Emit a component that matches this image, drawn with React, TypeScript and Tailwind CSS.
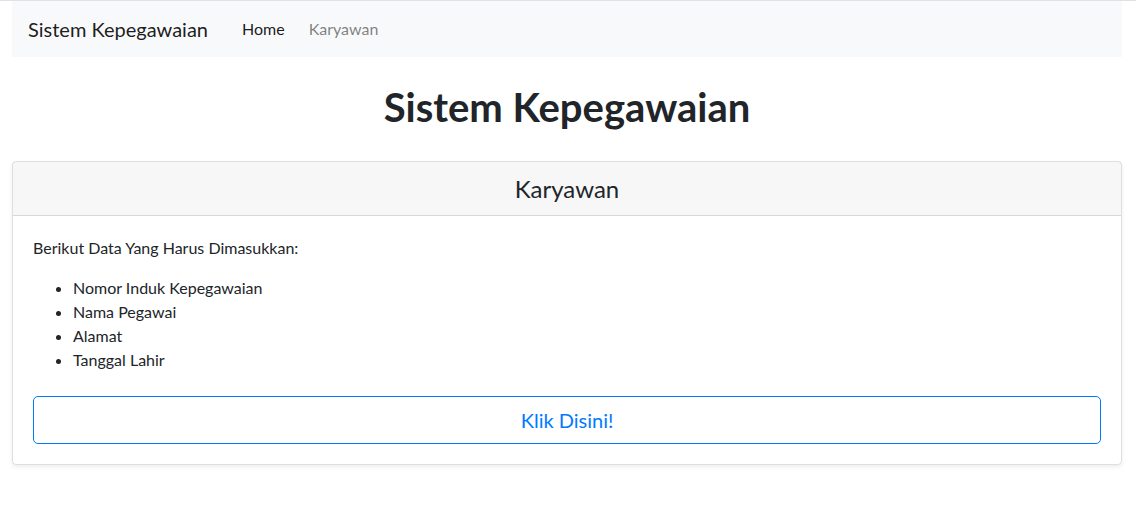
export default function App() {
  const items = ["Nomor Induk Kepegawaian", "Nama Pegawai", "Alamat", "Tanggal Lahir"]

  return (
    <div className="min-h-[521px] bg-white border-t border-[#dee2e6] font-['Lato',sans-serif] text-[#212529]">
      <div className="w-[1110px] ml-[12px]">
        {/* Navbar */}
        <nav className="flex items-center h-[56px] px-4 bg-[#f8f9fa]">
          <a className="text-[20px] leading-[30px] text-black/90 mr-[22px]">Sistem Kepegawaian</a>
          <a className="px-3 text-[16px] leading-6 text-black/90">Home</a>
          <a className="px-3 text-[16px] leading-6 text-black/50">Karyawan</a>
        </nav>

        <h1 className="mt-[26px] mb-[30px] text-center text-[40px] leading-[48px] font-bold">
          Sistem Kepegawaian
        </h1>

        {/* Card */}
        <div className="border border-black/[0.125] rounded-[4px] shadow-[0_2px_4px_rgba(0,0,0,0.075)]">
          <div className="py-3 px-5 bg-black/[0.03] border-b border-black/[0.125] text-center text-[24px] leading-[29px]">
            Karyawan
          </div>
          <div className="p-5 text-[16px] leading-6">
            <p className="mb-4">Berikut Data Yang Harus Dimasukkan:</p>
            <ul className="mb-6 pl-10 list-disc">
              {items.map((t) => (
                <li key={t}>{t}</li>
              ))}
            </ul>
            <button className="block w-full h-[48px] border border-[#007bff] rounded-[5px] text-[#007bff] text-[20px]">
              Klik Disini!
            </button>
          </div>
        </div>
      </div>
    </div>
  )
}
